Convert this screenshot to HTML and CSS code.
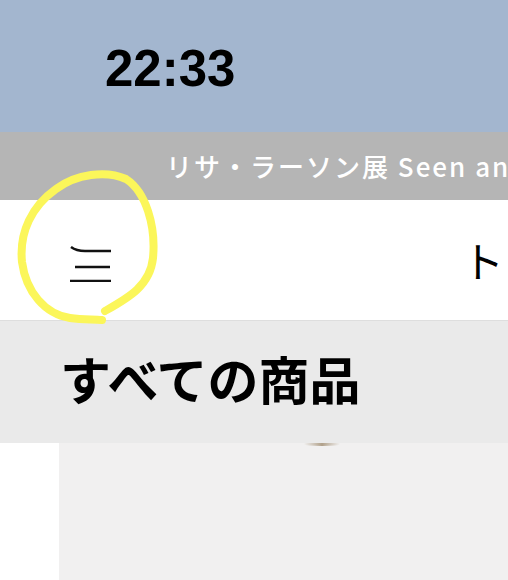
FILE: index.html
```html
<!DOCTYPE html>
<html lang="ja">
<head>
  <meta charset="UTF-8" />
  <meta name="viewport" content="width=device-width, initial-scale=1.0"/>
  <title>すべての商品</title>
  <link rel="stylesheet" href="styles.css">
</head>
<body>
  <div class="status">
    <span class="time">22:33</span>
  </div>

  <div class="banner">
    <span>リサ・ラーソン展 Seen and Unseen</span>
  </div>

  <div class="nav">
    <button class="menu" aria-label="メニュー">
      <svg width="44" height="44" viewBox="0 0 44 44">
        <path d="M3 9 C7 12 11 13 17 13 L43 13" fill="none" stroke="#111" stroke-width="2.6"/>
        <path d="M7 29 L42 29" stroke="#111" stroke-width="2.6"/>
        <path d="M2 44 L43 44" stroke="#111" stroke-width="2.6" transform="translate(0 -1)"/>
      </svg>
    </button>
    <span class="logo">トップ</span>
  </div>

  <div class="heading">
    <h1>すべての商品</h1>
  </div>

  <div class="list">
    <div class="card">
      <div class="thumb"></div>
    </div>
  </div>

  <!--手書きの丸印 -->
  <svg class="mark" width="508" height="580" viewBox="0 0 508 580">
    <path d="M105 311 C128 298 150 286 153 258 C156 226 146 192 126 179 C106 170 76 174 56 189 C32 206 19 232 22 262 C26 292 45 314 70 318 C84 320 94 319 102 320"
          fill="none" stroke="#fbf65a" stroke-width="8" stroke-linecap="round"/>
  </svg>
</body>
</html>
```

FILE: styles.css
```css
body {
  margin: 0;
  padding: 0;
  font-family: 'Noto Sans CJK JP', 'Noto Sans', sans-serif;
  background: white;
  overflow: hidden;
  width: 508px;
  height: 580px;
  position: relative;
}
.status {
  height: 132px;
  background: #a3b6cf;
  display: flex;
  align-items: center;
  padding-left: 105px;
}
.time {
  font-family: 'Liberation Sans', Arial, sans-serif;
  font-weight: bold;
  font-size: 51px;
  color: #000;
  margin-top: 4px;
}
.banner {
  height: 68px;
  background: #b5b5b5;
  display: flex;
  align-items: center;
  padding-left: 166px;
  white-space: nowrap;
  overflow: hidden;
}
.banner span {
  color: white;
  font-size: 26px;
  font-weight: 500;
  letter-spacing: 2px;
  margin-top: -2px;
}
.nav {
  height: 120px;
  background: white;
  border-bottom: 1px solid #dedede;
  display: flex;
  align-items: center;
  white-space: nowrap;
  overflow: hidden;
}
.menu {
  border: none;
  background: none;
  padding: 0;
  margin-left: 68px;
  margin-top: -1px;
  width: 44px;
  height: 44px;
  cursor: pointer;
}
.menu svg {
  display: block;
}
.logo {
  margin-left: 350px;
  font-size: 42px;
  color: #000;
  margin-top: -2px;
}
.heading {
  height: 122px;
  background: #eaeaea;
  display: flex;
  align-items: center;
  padding-left: 60px;
}
.heading h1 {
  margin: 0 0 8px;
  font-size: 51px;
  font-weight: bold;
  color: #000;
}
.list {
  padding-left: 59px;
}
.card {
  height: 140px;
  background: #f1f0f0;
}
.thumb {
  width: 36px;
  height: 3px;
  margin-left: 245px;
  border-radius: 0 0 50% 50%;
  background: linear-gradient(90deg, rgba(200,180,150,0), #a08c70, rgba(200,180,150,0));
  opacity: 0.8;
}
.mark {
  position: absolute;
  left: 0;
  top: 0;
  pointer-events: none;
}
```
